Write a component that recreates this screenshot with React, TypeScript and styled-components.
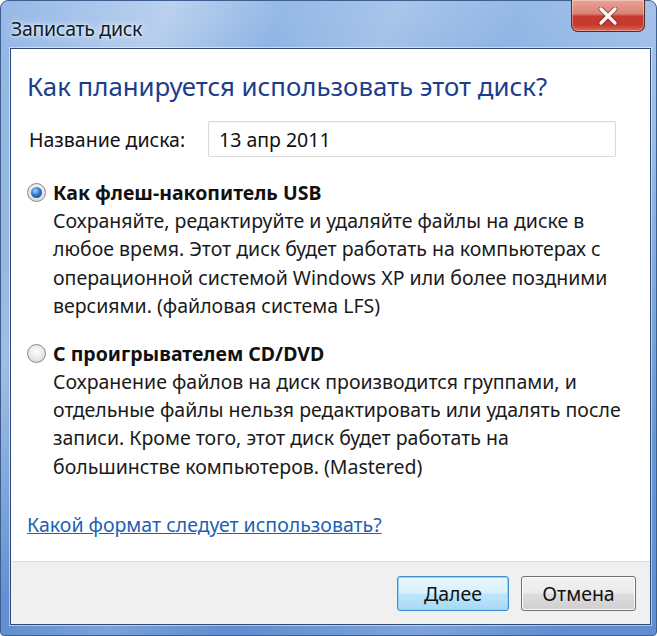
import React from "react";
import styled, { createGlobalStyle } from "styled-components";

const Global = createGlobalStyle`
  html, body { margin: 0; padding: 0; background: #fff; }
  body { width: 657px; height: 636px; overflow: hidden; }
`;

const Window = styled.div`
  width: 657px;
  height: 636px;
  box-sizing: border-box;
  display: flex;
  flex-direction: column;
  padding: 0 5px 10px 9px;
  border-radius: 8px 8px 4px 4px;
  background:
    linear-gradient(115deg, rgba(255,255,255,0) 0%, rgba(255,255,255,0.35) 18%, rgba(255,255,255,0) 30%, rgba(255,255,255,0.18) 42%, rgba(255,255,255,0) 55%, rgba(255,255,255,0.2) 75%, rgba(255,255,255,0) 90%),
    linear-gradient(180deg, #96b9e6 0%, #74a0d9 40%, #5f8dcf 100%);
  border: 1px solid #3d5f8f;
  font-family: "Segoe UI", "Noto Sans", "Open Sans", sans-serif;
`;

const TitleBar = styled.div`
  height: 47px;
  display: flex;
  justify-content: space-between;
  align-items: flex-start;
  flex-shrink: 0;
`;

const Title = styled.div`
  margin-top: 14px;
  margin-left: 1px;
  font-size: 19.5px;
  color: #0f1a2a;
  text-shadow: 0 0 8px rgba(255,255,255,0.9), 0 0 3px rgba(255,255,255,0.9);
  letter-spacing: -0.3px;
`;

const CloseButton = styled.div`
  width: 74px;
  height: 32px;
  margin-right: 6px;
  margin-top: -1px;
  box-sizing: border-box;
  border: 1px solid #5a2a22;
  border-top: none;
  border-radius: 0 0 7px 7px;
  background: linear-gradient(180deg, #e8a396 0%, #dc8273 45%, #c63a2e 52%, #c7392e 80%, #d96a55 100%);
  box-shadow: inset 0 0 0 1px rgba(255,255,255,0.35);
  display: flex;
  align-items: center;
  justify-content: center;
`;

const Client = styled.div`
  flex: 1;
  display: flex;
  flex-direction: column;
  background: #fff;
  border: 1px solid #2f4b75;
  box-shadow: 0 0 0 1px rgba(255,255,255,0.5);
`;

const Body = styled.div`
  flex: 1;
  padding: 20px 16px 0 16px;
  display: flex;
  flex-direction: column;
`;

const Heading = styled.div`
  font-size: 25.8px;
  color: #1c3d8c;
  line-height: 34px;
`;

const NameRow = styled.div`
  display: flex;
  align-items: center;
  margin-top: 18px;
  margin-left: 2px;
`;

const Label = styled.div`
  font-size: 19.5px;
  color: #111;
  width: 179px;
`;

const Input = styled.div`
  width: 408px;
  height: 36px;
  box-sizing: border-box;
  border: 1px solid #dcdcdc;
  border-radius: 2px;
  padding: 0 10px;
  display: flex;
  align-items: center;
  font-size: 19.5px;
  color: #111;
  box-shadow: inset 0 1px 1px rgba(0,0,0,0.04);
`;

const Option = styled.div<{ $top: number }>`
  margin-top: ${(p) => p.$top}px;
  display: flex;
  flex-direction: column;
`;

const OptionHead = styled.div`
  display: flex;
  align-items: center;
  gap: 7px;
`;

const RadioOuter = styled.div`
  width: 19px;
  height: 19px;
  box-sizing: border-box;
  border-radius: 50%;
  border: 1px solid #8a8a8a;
  background: radial-gradient(circle at 50% 40%, #ffffff 0%, #e4e4e4 60%, #c8c8c8 100%);
  display: flex;
  align-items: center;
  justify-content: center;
`;

const RadioDot = styled.div`
  width: 11px;
  height: 11px;
  border-radius: 50%;
  background: radial-gradient(circle at 40% 35%, #a7d6ff 0%, #2f76c9 45%, #0d3f86 100%);
`;

const OptionTitle = styled.div`
  font-size: 19.5px;
  font-weight: bold;
  color: #111;
`;

const Desc = styled.div`
  margin-left: 26px;
  margin-top: 1px;
  font-size: 19.5px;
  line-height: 28.4px;
  color: #1a1a1a;
`;

const Link = styled.a`
  margin-top: 30px;
  font-size: 19.5px;
  color: #1f5fb5;
  text-decoration: underline;
  align-self: flex-start;
`;

const Footer = styled.div`
  height: 62px;
  flex-shrink: 0;
  background: #f0f0f0;
  border-top: 1px solid #dcdcdc;
  display: flex;
  justify-content: flex-end;
  align-items: center;
  gap: 12px;
  padding-right: 14px;
`;

const Button = styled.div<{ $default?: boolean }>`
  width: ${(p) => (p.$default ? 112 : 115)}px;
  height: 35px;
  box-sizing: border-box;
  border-radius: 3px;
  border: 1px solid ${(p) => (p.$default ? "#3c8fd0" : "#707070")};
  background: ${(p) =>
    p.$default
      ? "linear-gradient(180deg, #eaf6fd 0%, #d9f0fc 48%, #bee6fd 52%, #a7d9f5 100%)"
      : "linear-gradient(180deg, #f2f2f2 0%, #ebebeb 48%, #dddddd 52%, #cfcfcf 100%)"};
  box-shadow: inset 0 0 0 1px ${(p) => (p.$default ? "#8fd6f8" : "#fcfcfc")};
  display: flex;
  align-items: center;
  justify-content: center;
  font-size: 19.5px;
  color: #111;
`;

export default function App() {
  return (
    <>
      <Global />
      <Window>
        <TitleBar>
          <Title>Записать диск</Title>
          <CloseButton>
            <svg width="22" height="18" viewBox="0 0 22 18">
              <path d="M4 2 L18 16 M18 2 L4 16" stroke="#3b0e0a" strokeWidth="5" strokeLinecap="round" opacity="0.5" />
              <path d="M4 2 L18 16 M18 2 L4 16" stroke="#ffffff" strokeWidth="3.2" strokeLinecap="round" />
            </svg>
          </CloseButton>
        </TitleBar>
        <Client>
          <Body>
            <Heading>Как планируется использовать этот диск?</Heading>
            <NameRow>
              <Label>Название диска:</Label>
              <Input>13 апр 2011</Input>
            </NameRow>
            <Option $top={22}>
              <OptionHead>
                <RadioOuter>
                  <RadioDot />
                </RadioOuter>
                <OptionTitle>Как флеш-накопитель USB</OptionTitle>
              </OptionHead>
              <Desc>
                Сохраняйте, редактируйте и удаляйте файлы на диске в<br />
                любое время. Этот диск будет работать на компьютерах с<br />
                операционной системой Windows XP или более поздними<br />
                версиями. (файловая система LFS)
              </Desc>
            </Option>
            <Option $top={19}>
              <OptionHead>
                <RadioOuter />
                <OptionTitle>С проигрывателем CD/DVD</OptionTitle>
              </OptionHead>
              <Desc>
                Сохранение файлов на диск производится группами, и<br />
                отдельные файлы нельзя редактировать или удалять после<br />
                записи. Кроме того, этот диск будет работать на<br />
                большинстве компьютеров. (Mastered)
              </Desc>
            </Option>
            <Link>Какой формат следует использовать?</Link>
          </Body>
          <Footer>
            <Button $default>Далее</Button>
            <Button>Отмена</Button>
          </Footer>
        </Client>
      </Window>
    </>
  );
}
